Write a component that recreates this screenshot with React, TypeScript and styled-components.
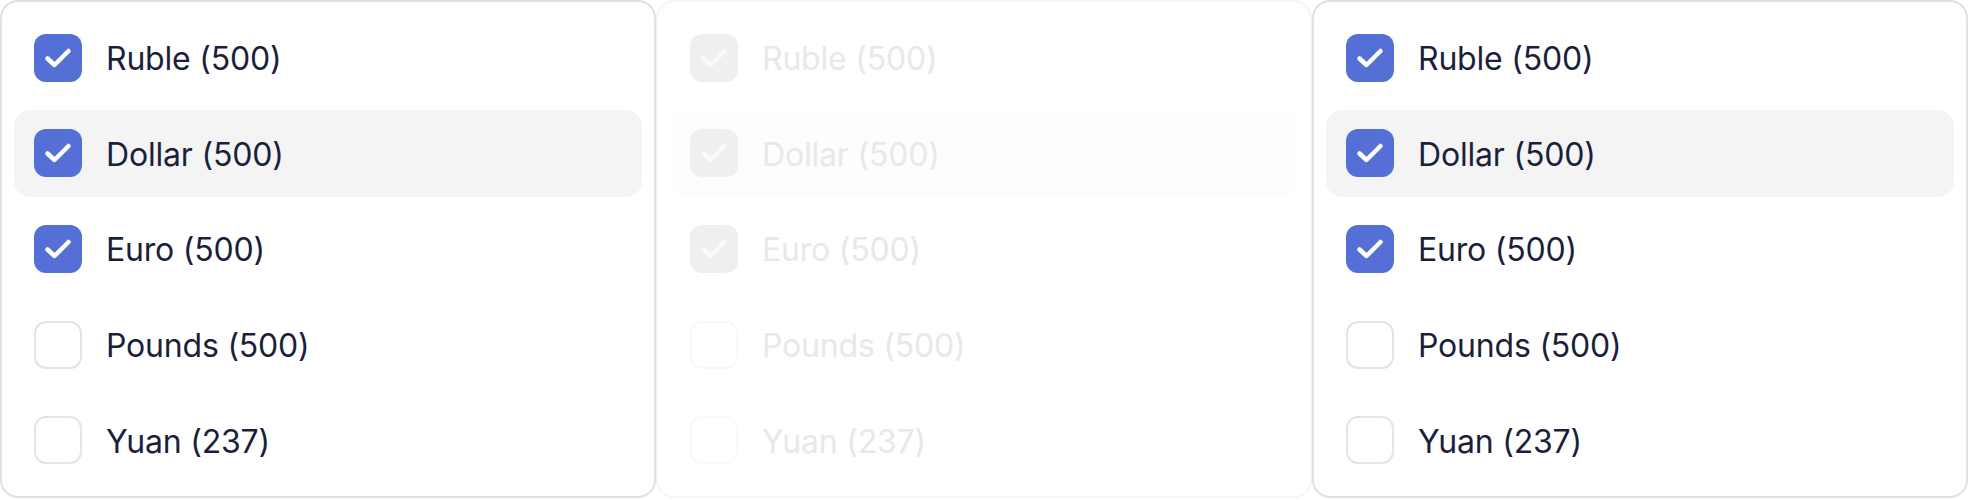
import styled, { createGlobalStyle } from 'styled-components';

const GlobalStyle = createGlobalStyle`
  body {
    margin: 0;
    background: #fff;
    font-family: Inter, "Noto Sans", sans-serif;
  }
`;

const Page = styled.div`
  display: flex;
  width: 1968px;
  height: 498px;
`;

const Panel = styled.div<{ $disabled?: boolean }>`
  flex: 1;
  box-sizing: border-box;
  display: flex;
  flex-direction: column;
  gap: 8px;
  padding: 12px;
  border: 2px solid ${(p) => (p.$disabled ? '#f5f5f5' : '#e2e2e2')};
  border-radius: 18px;
  background: #fff;
`;

const Row = styled.label<{ $hover?: boolean; $disabled?: boolean }>`
  display: flex;
  align-items: center;
  gap: 24px;
  height: 88px;
  padding: 0 20px;
  border-radius: 16px;
  background: ${(p) => (p.$hover ? (p.$disabled ? '#fdfdfd' : '#f4f4f4') : 'transparent')};
  cursor: ${(p) => (p.$disabled ? 'default' : 'pointer')};
`;

const Box = styled.span<{ $checked?: boolean; $disabled?: boolean }>`
  box-sizing: border-box;
  width: 48px;
  height: 48px;
  flex-shrink: 0;
  border-radius: 12px;
  display: flex;
  align-items: center;
  justify-content: center;
  background: ${(p) =>
    p.$checked ? (p.$disabled ? '#efefef' : '#5470d6') : '#fff'};
  border: ${(p) =>
    p.$checked ? 'none' : `2px solid ${p.$disabled ? '#f8f8f8' : '#e4e4e4'}`};
`;

const Label = styled.span<{ $disabled?: boolean }>`
  font-size: 32px;
  font-weight: 400;
  color: ${(p) => (p.$disabled ? '#e8e8e8' : '#1b1f3b')};
  letter-spacing: -0.2px;
  padding-top: 2px;
`;

const items = [
  { name: 'Ruble', count: 500, checked: true },
  { name: 'Dollar', count: 500, checked: true },
  { name: 'Euro', count: 500, checked: true },
  { name: 'Pounds', count: 500, checked: false },
  { name: 'Yuan', count: 237, checked: false },
];

const Check = ({ color }: { color: string }) => (
  <svg width="48" height="48" viewBox="0 0 48 48" fill="none">
    <path
      d="M13.5 24.5 20.5 31 34.5 17"
      stroke={color}
      strokeWidth="4.5"
      strokeLinecap="round"
      strokeLinejoin="round"
    />
  </svg>
);

const CheckList = ({ disabled }: { disabled?: boolean }) => (
  <Panel $disabled={disabled}>
    {items.map((it, i) => (
      <Row key={it.name} $hover={i === 1} $disabled={disabled}>
        <Box $checked={it.checked} $disabled={disabled}>
          {it.checked && <Check color={disabled ? '#fafafa' : '#fff'} />}
        </Box>
        <Label $disabled={disabled}>
          {it.name} ({it.count})
        </Label>
      </Row>
    ))}
  </Panel>
);

export default function App() {
  return (
    <>
      <GlobalStyle />
      <Page>
        <CheckList />
        <CheckList disabled />
        <CheckList />
      </Page>
    </>
  );
}
